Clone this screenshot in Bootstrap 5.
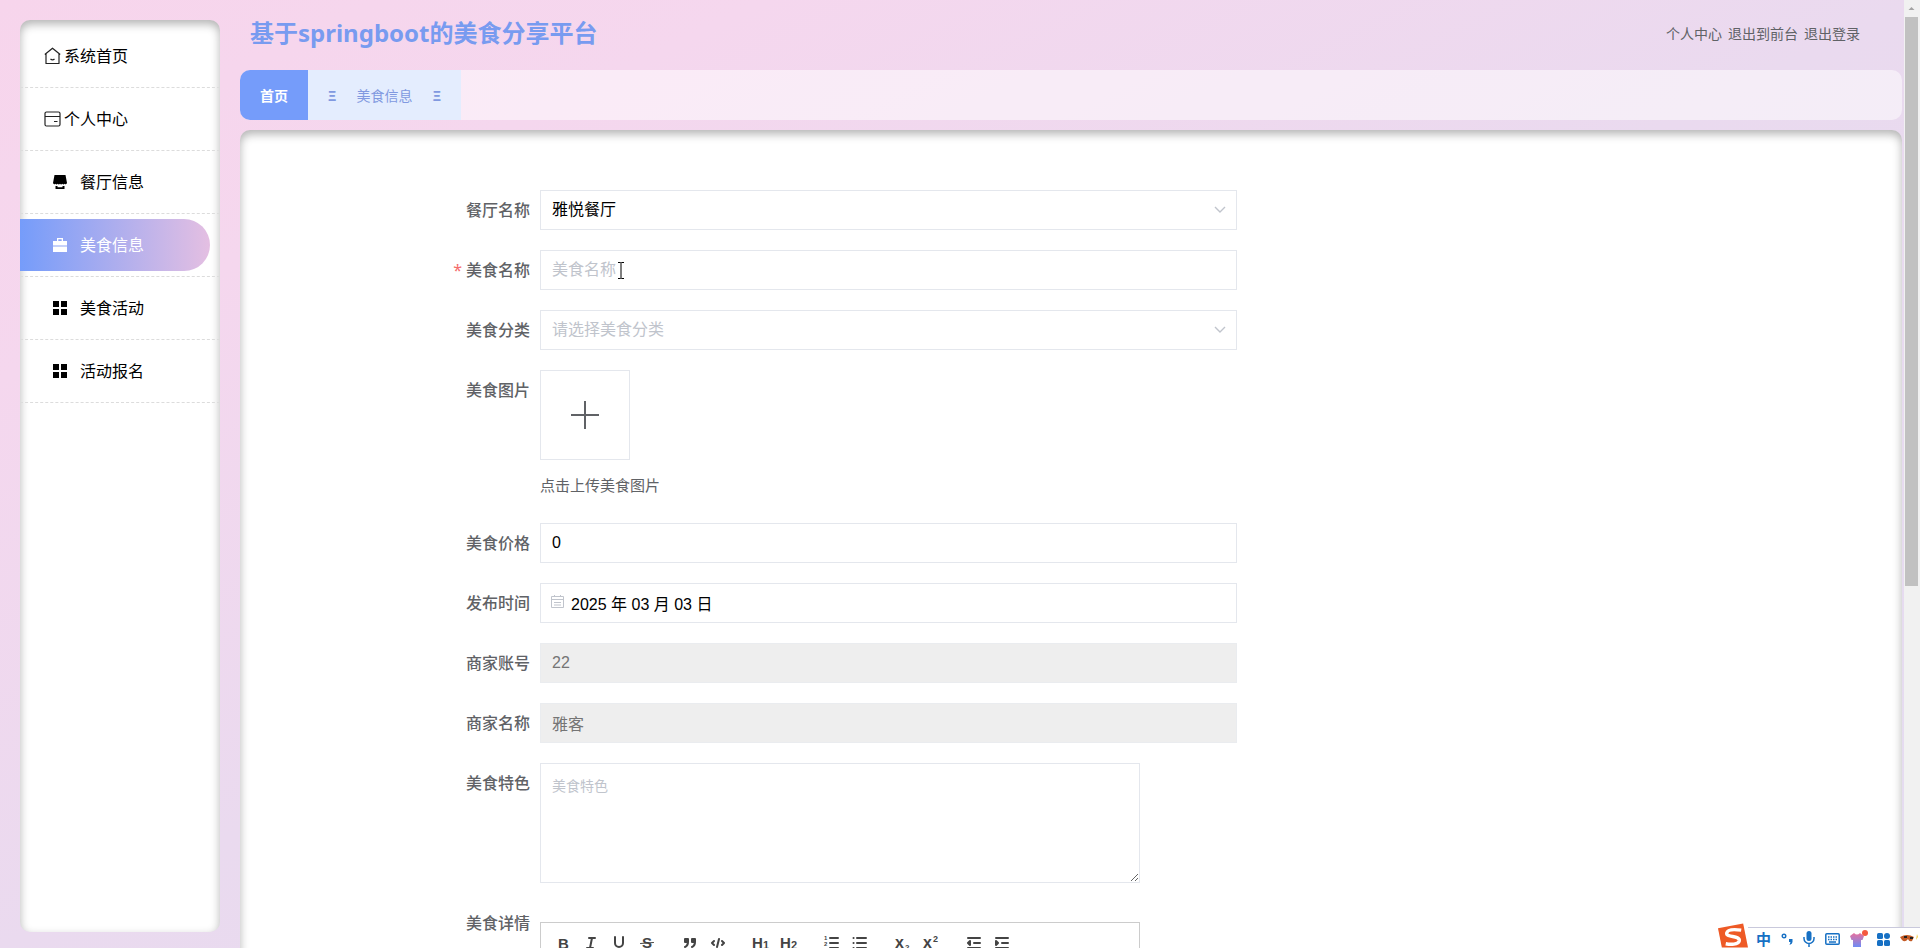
<!DOCTYPE html>
<html lang="zh-CN">
<head>
<meta charset="utf-8">
<meta name="viewport" content="width=device-width, initial-scale=1">
<title>基于springboot的美食分享平台</title>
<link href="https://cdn.jsdelivr.net/npm/bootstrap@5.3.0/dist/css/bootstrap.min.css" rel="stylesheet">
<style>
body { font-family: "Noto Sans", "Noto Sans CJK SC", sans-serif; background: #efd8ee; }
a { color: inherit; text-decoration: none; }
svg { display: block; flex: none; }
.app-shell { background: linear-gradient(to bottom right, #f7d5ec 0%, #f5d7ee 20%, #eadaef 50%, #e4dcf0 100%); }
.app-body { padding: 20px 2px 0 20px; gap: 20px; }
.side-menu { width: 200px; margin-bottom: 16px; padding-top: 5px; border-radius: 10px; background: #fff; box-shadow: inset 0 4px 10px rgba(0,0,0,.3); overflow: hidden; }
.side-item { border-bottom: 1px dashed #dcdcdc; padding: 5px 0; }
.side-link { height: 52px; margin-right: 10px; padding-left: 24px; gap: 3px; font-size: 16px; color: #000; border-radius: 0 26px 26px 0; }
.side-link.sub { padding-left: 33px; gap: 13px; }
.side-link.active { background: linear-gradient(90deg, #759cfa, #e4bfe2); color: #fff; }
.app-main { margin-top: -20px; margin-bottom: -20px; }
.app-head { height: 70px; padding: 0 42px 4px 10px; }
.site-title { font-size: 24px; font-weight: 700; color: #789bf0; }
.head-links { gap: 6px; font-size: 14px; color: #606266; }
.tab-bar { height: 50px; border-radius: 10px; background: rgba(255,255,255,.5); font-size: 14px; overflow: hidden; }
.tab-home { width: 68px; background: #759cfa; color: #fff; font-weight: 700; }
.tab-page { width: 153px; gap: 20px; background: #e4edfe; color: #8199e0; }
.content-panel { margin-top: 10px; padding: 60px 40% 0 180px; border-radius: 10px 10px 0 0; background: #fff; box-shadow: inset 0 4px 10px rgba(0,0,0,.3); overflow: hidden; }
.form-line { margin-bottom: 20px; }
.line-label { width: 120px; padding-right: 10px; line-height: 40px; text-align: right; font-size: 16px; font-weight: 500; color: #606266; flex: none; }
.required::before { content: "*"; color: #f56c6c; margin-right: 4px; font-weight: 400; }
.field { height: 40px; padding: 0 11px; border: 1px solid #e4e7ed; border-radius: 0; font-family: "Liberation Sans", "Noto Sans CJK SC", sans-serif; font-size: 16px; color: #000; background-color: #fff; }
.field::placeholder, .unset { color: #c0c4cc; }
select.field { background-image: url("data:image/svg+xml,%3Csvg xmlns='http://www.w3.org/2000/svg' viewBox='0 0 12 12'%3E%3Cpath d='M1 3l5 5 5-5' fill='none' stroke='%23c0c4cc' stroke-width='1.4'/%3E%3C/svg%3E"); background-size: 12px; background-position: right 10px center; }
.field:disabled { background: #eee; color: #757575; border-color: #eaecef; opacity: 1; }
.date-field { padding-left: 30px; }
.date-icon { left: 11px; top: 12px; }
.upload-box { width: 90px; height: 90px; border: 1px solid #e4e7ed; background: #fff; padding: 0; }
.upload-tip { margin-top: 13px; font-size: 15px; line-height: 24px; color: #606266; }
.upload-line { height: 133px; }
.wide-block { max-width: 600px; }
textarea.field { height: 120px; padding: 12px 11px; font-size: 14px; line-height: 21px; resize: vertical; }
.editor { margin-top: 19px; height: 300px; border: 1px solid #ccc; padding: 8px; }
.tool-group { margin-right: 15px; }
.tool { width: 28px; height: 24px; padding: 3px 5px; border: 0; background: none; color: #444; }
.tool svg { width: 18px; height: 18px; fill: none; stroke: currentColor; stroke-width: 2; stroke-linecap: round; stroke-linejoin: round; }
.tool text { fill: currentColor; stroke: none; font-family: "Liberation Sans", sans-serif; font-weight: 700; }
.scroll-track { width: 16px; background: #f1f1f1; padding: 0 2px 0 1px; }
.scroll-arrow { height: 17px; padding: 7px 3px; }
.scroll-thumb { height: 60%; background: #c1c1c1; }
.text-cursor { left: 77px; top: 12px; }
.ime-bar { right: 0; bottom: 0; }
.ime-tools { height: 21px; width: 172px; padding: 2px 1px 0 8px; background: #fff; border-top: 1px solid #c9c9dc; color: #1670c4; }
.ime-char { font-size: 15px; line-height: 18px; font-weight: 700; }
</style>
</head>
<body>
<div class="app-shell d-flex vh-100 overflow-hidden position-relative">
  <div class="app-body d-flex flex-grow-1">
    <nav class="side-menu flex-shrink-0" aria-label="主菜单">
      <div class="side-item"><a href="#" class="side-link d-flex align-items-center">
        <svg width="17" height="18" viewBox="0 0 17 18" fill="none" stroke="#222" stroke-width="1.2" stroke-linejoin="round"><path d="M2 7v9.500h13V7M.8 7.500 8.500 1.200l7.700 6.300M6.500 12q2 1.800 4 0"/></svg><span>系统首页</span></a></div>
      <div class="side-item"><a href="#" class="side-link d-flex align-items-center">
        <svg width="17" height="18" viewBox="0 0 17 18" fill="none" stroke="#222" stroke-width="1.2"><rect x="1" y="2" width="15" height="14" rx="1.500"/><path d="M1 6.500h15M10 11.500h3.500"/></svg><span>个人中心</span></a></div>
      <div class="side-item"><a href="#" class="side-link sub d-flex align-items-center">
        <svg width="14" height="16" viewBox="0 0 14 16" fill="currentColor"><path d="M1.500 1h11L14 9q-1 2.200-2.400.7-1.200 1.400-2.300 0-1.200 1.400-2.300 0-1.200 1.400-2.300 0-1.200 1.400-2.300 0Q1 11.200 0 9zM2.500 12h9v3h-9z"/><path d="M4.500 12h5v1.200h-5z" fill="#fff"/></svg><span>餐厅信息</span></a></div>
      <div class="side-item"><a href="#" class="side-link sub active d-flex align-items-center" aria-current="page">
        <svg width="14" height="16" viewBox="0 0 14 16" fill="currentColor"><path fill-rule="evenodd" d="M4 4V1h6v3h4v4.500H0V4zm1.300 0h3.400V2.300H5.300zM0 9.500h14V15H0z"/></svg><span>美食信息</span></a></div>
      <div class="side-item"><a href="#" class="side-link sub d-flex align-items-center">
        <svg width="14" height="16" viewBox="0 0 14 16" fill="currentColor"><path d="M0 1h6v6H0zM8 1h6v6H8zM0 9h6v6H0zM8 9h6v6H8z"/></svg><span>美食活动</span></a></div>
      <div class="side-item"><a href="#" class="side-link sub d-flex align-items-center">
        <svg width="14" height="16" viewBox="0 0 14 16" fill="currentColor"><path d="M0 1h6v6H0zM8 1h6v6H8zM0 9h6v6H0zM8 9h6v6H8z"/></svg><span>活动报名</span></a></div>
    </nav>

    <main class="app-main flex-grow-1 d-flex flex-column">
      <header class="app-head d-flex align-items-center justify-content-between flex-shrink-0">
        <h1 class="site-title mb-0">基于springboot的美食分享平台</h1>
        <div class="head-links d-flex"><a href="#">个人中心</a><a href="#">退出到前台</a><a href="#">退出登录</a></div>
      </header>
      <div class="tab-bar d-flex flex-shrink-0">
        <a href="#" class="tab-home d-flex align-items-center justify-content-center">首页</a>
        <a href="#" class="tab-page d-flex align-items-center justify-content-center"><span class="fw-bold">Ξ</span><span>美食信息</span><span class="fw-bold">Ξ</span></a>
      </div>
      <form class="content-panel flex-grow-1">
        <div class="form-line d-flex"><label class="line-label" for="shop">餐厅名称</label>
          <select id="shop" class="form-select field"><option>雅悦餐厅</option></select></div>
        <div class="form-line d-flex"><label class="line-label required" for="food">美食名称</label>
          <div class="position-relative flex-grow-1"><input id="food" type="text" class="form-control field" placeholder="美食名称">
            <svg class="text-cursor position-absolute" width="8" height="17" viewBox="0 0 8 17" fill="none" stroke="#000"><path d="M1 .5h2.500l.5.500.5-.5H7M4 1v15M1 16.500h2.500l.5-.5.5.500H7"/></svg></div></div>
        <div class="form-line d-flex"><label class="line-label" for="kind">美食分类</label>
          <select id="kind" class="form-select field unset"><option>请选择美食分类</option></select></div>
        <div class="form-line upload-line d-flex"><label class="line-label" for="photo">美食图片</label>
          <div><button id="photo" type="button" class="upload-box d-flex align-items-center justify-content-center" aria-label="上传">
            <svg width="28" height="28" viewBox="0 0 28 28" stroke="#606266" stroke-width="2"><path d="M14 0v28M0 14h28"/></svg></button>
            <div class="upload-tip">点击上传美食图片</div></div></div>
        <div class="form-line d-flex"><label class="line-label" for="price">美食价格</label>
          <input id="price" type="text" class="form-control field" value="0"></div>
        <div class="form-line d-flex"><label class="line-label" for="day">发布时间</label>
          <div class="position-relative flex-grow-1"><input id="day" type="text" class="form-control field date-field" value="2025 年 03 月 03 日">
            <svg class="date-icon position-absolute" width="13" height="13" viewBox="0 0 13 13" fill="none" stroke="#c0c4cc"><path d="M.5 1.500h12v11H.5zM.5 4.500h12M3 7.500h7M3 10h7M3.500 0v2M9.500 0v2"/></svg></div></div>
        <div class="form-line d-flex"><label class="line-label" for="account">商家账号</label>
          <input id="account" type="text" class="form-control field" value="22" disabled></div>
        <div class="form-line d-flex"><label class="line-label" for="merchant">商家名称</label>
          <input id="merchant" type="text" class="form-control field" value="雅客" disabled></div>
        <div class="form-line d-flex"><label class="line-label" for="feature">美食特色</label>
          <textarea id="feature" class="form-control field wide-block" placeholder="美食特色"></textarea></div>
        <div class="form-line d-flex"><span class="line-label" id="detail">美食详情</span>
          <div class="editor wide-block flex-grow-1" role="group" aria-labelledby="detail">
            <div class="d-flex">
              <div class="tool-group d-flex">
                <button type="button" class="tool" aria-label="加粗"><svg viewBox="0 0 18 18"><text x="4" y="15" font-size="15">B</text></svg></button>
                <button type="button" class="tool" aria-label="斜体"><svg viewBox="0 0 18 18"><path d="M7 4h6M5 14h6M8 14l2-10"/></svg></button>
                <button type="button" class="tool" aria-label="下划线"><svg viewBox="0 0 18 18"><path d="M5 3v6a4 4 0 0 0 8 0V3"/><path d="M3 15.500h12" stroke-width="1"/></svg></button>
                <button type="button" class="tool" aria-label="删除线"><svg viewBox="0 0 18 18"><text x="4" y="14" font-size="15">S</text><path d="M2.500 9.500l13-1" stroke-width="1"/></svg></button>
              </div>
              <div class="tool-group d-flex">
                <button type="button" class="tool" aria-label="引用"><svg viewBox="0 0 18 18"><path fill="currentColor" d="M4 5h3v3H4zM11 5h3v3h-3zM7 8c0 4-3 5-3 5M14 8c0 4-3 5-3 5"/></svg></button>
                <button type="button" class="tool" aria-label="代码"><svg viewBox="0 0 18 18"><path d="M5 7 3 9l2 2M13 7l2 2-2 2M10 5 8 13"/></svg></button>
              </div>
              <div class="tool-group d-flex">
                <button type="button" class="tool" aria-label="标题一"><svg viewBox="0 0 18 18"><text x="0" y="14" font-size="15">H</text><text x="11" y="15" font-size="11">1</text></svg></button>
                <button type="button" class="tool" aria-label="标题二"><svg viewBox="0 0 18 18"><text x="0" y="14" font-size="15">H</text><text x="11" y="15" font-size="11">2</text></svg></button>
              </div>
              <div class="tool-group d-flex">
                <button type="button" class="tool" aria-label="有序列表"><svg viewBox="0 0 18 18"><path d="M7 4h8M7 9h8M7 14h8"/><text x="1" y="6" font-size="6">1</text><text x="1" y="12" font-size="6">2</text><text x="1" y="18" font-size="6">3</text></svg></button>
                <button type="button" class="tool" aria-label="无序列表"><svg viewBox="0 0 18 18"><path d="M6 4h9M6 9h9M6 14h9M2.500 4h.1M2.500 9h.1M2.500 14h.1"/></svg></button>
              </div>
              <div class="tool-group d-flex">
                <button type="button" class="tool" aria-label="下标"><svg viewBox="0 0 18 18"><text x="1" y="14" font-size="16">x</text><text x="11" y="16" font-size="8">2</text></svg></button>
                <button type="button" class="tool" aria-label="上标"><svg viewBox="0 0 18 18"><text x="1" y="14" font-size="16">x</text><text x="11" y="8" font-size="9">2</text></svg></button>
              </div>
              <div class="tool-group d-flex">
                <button type="button" class="tool" aria-label="减少缩进"><svg viewBox="0 0 18 18"><path d="M3 14h12M3 4h12M9 9h6M5 7v4L3 9z"/></svg></button>
                <button type="button" class="tool" aria-label="增加缩进"><svg viewBox="0 0 18 18"><path fill="currentColor" d="M3 14h12M3 4h12M9 9h6M3 7v4l2-2z"/></svg></button>
              </div>
            </div>
          </div></div>
      </form>
    </main>
  </div>
  <div class="scroll-track flex-shrink-0">
    <svg class="scroll-arrow" width="13" height="17" viewBox="0 0 8 4" fill="#a3a3a3"><path d="M0 4 4 0l4 4z"/></svg>
    <div class="scroll-thumb"></div>
  </div>
  <div class="ime-bar position-absolute d-flex align-items-end">
    <svg width="31" height="25" viewBox="0 0 32 25"><path d="M1 5 27 0l5 25H5z" fill="#ee5a26"/><path d="M25 7Q11 5 10 10c-.5 5 14 2 13 8-1 4-9 4-14 3" fill="none" stroke="#fff" stroke-width="3.500"/></svg>
    <div class="ime-tools d-flex justify-content-between align-items-center">
      <span class="ime-char">中</span>
      <svg width="13" height="16" viewBox="0 0 13 16"><circle cx="3" cy="5" r="1.800" fill="none" stroke="currentColor" stroke-width="1.400"/><path d="M8 8h3.500v3q0 2-3 3l1-3H8z" fill="currentColor"/></svg>
      <svg width="12" height="16" viewBox="0 0 12 16"><rect x="3.500" y="0" width="5" height="10" rx="2.500" fill="currentColor"/><path d="M1 6v1.500a5 5 0 0 0 10 0V6M6 12v4" fill="none" stroke="currentColor" stroke-width="1.500"/></svg>
      <svg width="15" height="12" viewBox="0 0 15 12" fill="none" stroke="currentColor" stroke-width="1.500"><rect x=".8" y=".8" width="13.400" height="10.400" rx="1"/><path d="M3 4h9M3 6.500h9" stroke-dasharray="1.500 1"/><path d="M4 9h7"/></svg>
      <svg width="18" height="18" viewBox="0 0 18 18"><defs><linearGradient id="shirt" x1="0" y1="0" x2="0" y2="1"><stop offset="0" stop-color="#e86f9c"/><stop offset="1" stop-color="#6f8cf5"/></linearGradient></defs><path d="M0 6l4-3q3 3 6 0l4 3-1.500 4H11v7H3v-7H1.500z" fill="url(#shirt)"/><circle cx="15" cy="3" r="3" fill="#f4583f"/></svg>
      <svg width="13" height="13" viewBox="0 0 13 13" fill="currentColor"><rect width="6" height="6" rx="1.500"/><circle cx="10" cy="3" r="3"/><rect y="7" width="6" height="6" rx="1.500"/><rect x="7" y="7" width="6" height="6" rx="1.500"/></svg>
      <svg width="19" height="14" viewBox="0 0 19 14"><path d="M0 5q7-4 14 0l-2 4q-3 1-4-2-3 4-6 1z" fill="#c35a24"/><path d="M4 5h3M10 6h3" stroke="#222" stroke-width="2"/><path d="m17 2 1 3-2 3z" fill="#f8cf4c"/></svg>
    </div>
  </div>
</div>
<script src="https://cdn.jsdelivr.net/npm/bootstrap@5.3.0/dist/js/bootstrap.bundle.min.js"></script>
</body>
</html>
